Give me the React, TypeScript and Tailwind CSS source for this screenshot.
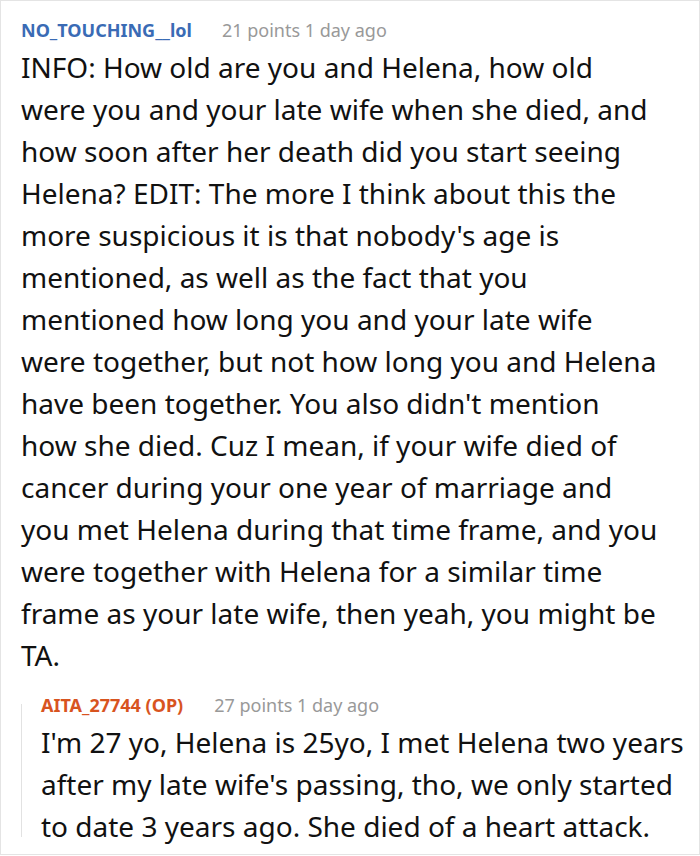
import React from "react";

const mainText =
  "INFO: How old are you and Helena, how old were you and your late wife when she died, and how soon after her death did you start seeing Helena? EDIT: The more I think about this the more suspicious it is that nobody's age is mentioned, as well as the fact that you mentioned how long you and your late wife were together, but not how long you and Helena have been together. You also didn't mention how she died. Cuz I mean, if your wife died of cancer during your one year of marriage and you met Helena during that time frame, and you were together with Helena for a similar time frame as your late wife, then yeah, you might be TA.";

const replyText =
  "I'm 27 yo, Helena is 25yo, I met Helena two years after my late wife's passing, tho, we only started to date 3 years ago. She died of a heart attack.";

const App: React.FC = () => {
  return (
    <div className="w-[700px] h-[856px] bg-white font-['Noto_Sans',sans-serif]">
      <div className="h-[855px] border border-[#e4e4e4] pt-[17px] pl-[20px] pb-[5px]">
        {/* comment header */}
        <div className="flex items-baseline gap-[30px] text-[18px] leading-[24px]">
          <span className="font-bold text-[#3a6bb5]">NO_TOUCHING__lol</span>
          <span className="text-[#999999]">21 points 1 day ago</span>
        </div>
        <p className="mt-[4px] w-[639px] text-[28px] leading-[42px] text-[#111111]">{mainText}</p>

        {/* reply */}
        <div className="mt-[17px] flex">
          <div className="w-px bg-[#e2e2e2] mt-[11px] mb-[10px]" />
          <div className="pl-[19px]">
            <div className="flex items-baseline gap-[31px] text-[18px] leading-[24px]">
              <span className="font-bold text-[#d8541f]">AITA_27744 (OP)</span>
              <span className="text-[#999999]">27 points 1 day ago</span>
            </div>
            <p className="mt-[4px] w-[644px] text-[28px] leading-[42px] text-[#111111]">{replyText}</p>
          </div>
        </div>
      </div>
    </div>
  );
};

export default App;
